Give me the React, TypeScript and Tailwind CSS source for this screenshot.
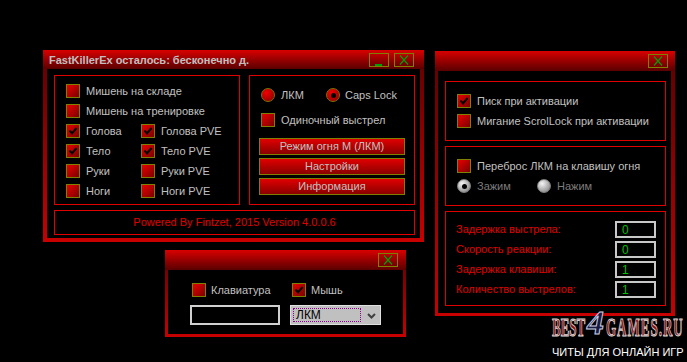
import React from "react";

function Check({ checked }: { checked?: boolean }) {
  return (
    <div className="relative w-[14px] h-[14px] shrink-0 border border-[#808000] bg-[linear-gradient(135deg,#e80000,#7a0000)]">
      {checked && (
        <svg className="absolute left-0 top-0" width="12" height="12" viewBox="0 0 12 12">
          <path d="M2.5 5.5 L5 8.5 L9.5 3" stroke="#000" strokeWidth="2" fill="none" />
        </svg>
      )}
    </div>
  );
}

function Radio({ checked, gray }: { checked?: boolean; gray?: boolean }) {
  return (
    <div
      className={
        "relative w-[14px] h-[14px] shrink-0 rounded-full border flex items-center justify-center " +
        (gray
          ? "border-[#808080] bg-[radial-gradient(circle_at_35%_30%,#f4f4f4,#9a9a9a_70%,#6a6a6a)]"
          : "border-[#807000] bg-[radial-gradient(circle_at_35%_30%,#f00000,#b00000_60%,#700000)]")
      }
    >
      {checked && <div className="w-[5px] h-[5px] rounded-full bg-black" />}
    </div>
  );
}

function CloseBtn() {
  return (
    <div className="relative w-[20px] h-[14px] border border-[#808000]">
      <svg className="absolute left-0 top-0" width="18" height="12" viewBox="0 0 18 12">
        <path d="M5 1.5 L13 10.5 M13 1.5 L5 10.5" stroke="#00a000" strokeWidth="1.2" fill="none" />
      </svg>
    </div>
  );
}

function MinBtn() {
  return (
    <div className="relative w-[20px] h-[14px] border border-[#808000] flex items-end justify-center">
      <div className="w-[7px] h-[2px] bg-[#00a000] ml-[-2px]" />
    </div>
  );
}

function Btn({ children }: { children: React.ReactNode }) {
  return (
    <div className="h-[17px] border border-[#808000] bg-[linear-gradient(to_bottom,#e00000,#8a0000)] flex items-center justify-center text-[11px] leading-none text-[#c0c0c0]">
      {children}
    </div>
  );
}

function Row({ children }: { children: React.ReactNode }) {
  return <div className="flex items-center gap-[6px] h-[14px]">{children}</div>;
}

const lbl = "text-[11px] leading-none text-[#c0c0c0] whitespace-nowrap";
const red = "text-[11px] leading-none text-[#e00000] whitespace-nowrap";

function NumBox({ v }: { v: string }) {
  return (
    <div className="w-[41px] h-[17px] border-2 border-[#c8c8c8] bg-black flex items-center pl-[5px] text-[12px] leading-none text-[#00c000]">
      {v}
    </div>
  );
}

export default function App() {
  return (
    <div className="relative w-[687px] h-[362px] bg-black overflow-hidden font-['Liberation_Sans',Arial,sans-serif]">
      {/* Main window */}
      <div className="absolute left-[43px] top-[50px] w-[381px] h-[192px] flex flex-col bg-[linear-gradient(to_bottom,#600000,#c80000)]">
        <div className="h-[19px] shrink-0 flex items-start bg-[linear-gradient(to_bottom,#d80000,#5a0000)] pl-[6px] pr-[10px]">
          <span className="mt-[5px] text-[11px] font-bold leading-none text-[#c0c0c0] whitespace-nowrap">
            FastKillerEx осталось: бесконечно д.
          </span>
          <div className="ml-auto mt-[3px] flex gap-[5px]">
            <MinBtn />
            <CloseBtn />
          </div>
        </div>
        <div className="flex-1 mx-[4px] mb-[4px] bg-black flex flex-col pt-[6px] pl-[7px] pr-[5px]">
          <div className="flex gap-[9px] h-[130px]">
            <div className="w-[186px] border border-[#e00000] pt-[8px] pl-[11px] flex flex-col gap-[6px]">
              <Row>
                <Check />
                <span className={lbl}>Мишень на складе</span>
              </Row>
              <Row>
                <Check />
                <span className={lbl}>Мишень на тренировке</span>
              </Row>
              {[
                ["Голова", true, "Голова PVE", true],
                ["Тело", true, "Тело PVE", true],
                ["Руки", false, "Руки PVE", false],
                ["Ноги", false, "Ноги PVE", false],
              ].map((r) => (
                <div key={r[0] as string} className="grid grid-cols-[75px_1fr]">
                  <Row>
                    <Check checked={r[1] as boolean} />
                    <span className={lbl}>{r[0] as string}</span>
                  </Row>
                  <Row>
                    <Check checked={r[3] as boolean} />
                    <span className={lbl}>{r[2] as string}</span>
                  </Row>
                </div>
              ))}
            </div>
            <div className="w-[166px] border border-[#e00000] pt-[12px] px-[9px] flex flex-col">
              <div className="flex pl-[2px]">
                <div className="w-[65px] flex items-center gap-[6px]">
                  <Radio />
                  <span className={lbl}>ЛКМ</span>
                </div>
                <div className="flex items-center gap-[5px]">
                  <Radio checked />
                  <span className={lbl}>Caps Lock</span>
                </div>
              </div>
              <div className="pl-[2px] mt-[11px]">
                <Row>
                  <Check />
                  <span className={lbl}>Одиночный выстрел</span>
                </Row>
              </div>
              <div className="mt-[11px] flex flex-col gap-[3px]">
                <Btn>Режим огня M (ЛКМ)</Btn>
                <Btn>Настройки</Btn>
                <Btn>Информация</Btn>
              </div>
            </div>
          </div>
          <div className="mt-[5px] h-[25px] border border-[#e00000] flex items-center justify-center">
            <span className={red}>Powered By Fintzet, 2015 Version 4.0.0.6</span>
          </div>
        </div>
      </div>

      {/* Small window */}
      <div className="absolute left-[165px] top-[250px] w-[241px] h-[87px] flex flex-col bg-[linear-gradient(to_bottom,#600000,#c80000)]">
        <div className="h-[20px] shrink-0 flex justify-end items-start pt-[3px] pr-[8px] bg-[linear-gradient(to_bottom,#d80000,#5a0000)]">
          <CloseBtn />
        </div>
        <div className="flex-1 mx-[3px] mb-[3px] bg-black pt-[13px] pl-[22px] flex flex-col">
          <div className="flex pl-[2px]">
            <div className="w-[100px] flex items-center gap-[5px]">
              <Check />
              <span className={lbl}>Клавиатура</span>
            </div>
            <div className="flex items-center gap-[5px]">
              <Check checked />
              <span className={lbl}>Мышь</span>
            </div>
          </div>
          <div className="mt-[8px] flex gap-[10px]">
            <div className="w-[90px] h-[20px] border-2 border-[#d0d0d0] bg-black" />
            <div className="relative w-[91px] h-[20px] border border-[#e0e0e0] bg-[#c0c0c0] flex items-center">
              <div className="ml-[2px] w-[68px] h-[14px] border border-dotted border-[#900090] flex items-center pl-[2px] text-[12px] leading-none text-black">
                ЛКМ
              </div>
              <svg className="absolute right-[4px] top-[7px]" width="9" height="6" viewBox="0 0 9 6">
                <path d="M1 1 L4.5 4.5 L8 1" stroke="#404040" strokeWidth="2" fill="none" />
              </svg>
            </div>
          </div>
        </div>
      </div>

      {/* Right window */}
      <div className="absolute left-[435px] top-[51px] w-[240px] h-[265px] flex flex-col bg-[linear-gradient(to_bottom,#600000,#c80000)]">
        <div className="h-[20px] shrink-0 flex justify-end items-start pt-[3px] pr-[7px] bg-[linear-gradient(to_bottom,#d80000,#5a0000)]">
          <CloseBtn />
        </div>
        <div className="flex-1 ml-[3px] mr-[4px] mb-[3px] bg-black pt-[10px] pl-[7px] pr-[5px] flex flex-col gap-[5px]">
          <div className="h-[60px] border border-[#e00000] pt-[12px] pl-[11px] flex flex-col gap-[6px]">
            <Row>
              <Check checked />
              <span className={lbl}>Писк при активации</span>
            </Row>
            <Row>
              <Check />
              <span className={lbl}>Мигание ScrolLock при активации</span>
            </Row>
          </div>
          <div className="h-[60px] border border-[#e00000] pt-[12px] pl-[11px] flex flex-col gap-[6px]">
            <Row>
              <Check />
              <span className={lbl}>Переброс ЛКМ на клавишу огня</span>
            </Row>
            <div className="flex">
              <div className="w-[80px] flex items-center gap-[6px]">
                <Radio gray checked />
                <span className="text-[11px] leading-none text-[#7c7c7c]">Зажим</span>
              </div>
              <div className="flex items-center gap-[6px]">
                <Radio gray />
                <span className="text-[11px] leading-none text-[#7c7c7c]">Нажим</span>
              </div>
            </div>
          </div>
          <div className="h-[95px] border border-[#e00000] pt-[9px] pl-[10px] pr-[9px] flex flex-col gap-[3px]">
            {[
              ["Задержка выстрела:", "0"],
              ["Скорость реакции:", "0"],
              ["Задержка клавиши:", "1"],
              ["Количество выстрелов:", "1"],
            ].map(([t, v]) => (
              <div key={t} className="flex items-center justify-between">
                <span className={red}>{t}</span>
                <NumBox v={v} />
              </div>
            ))}
          </div>
        </div>
      </div>

      {/* Watermark */}
      <div className="absolute left-[552px] top-[311px] flex items-end h-[29px] font-['Liberation_Serif',serif] font-bold">
        <span className="block w-[34px] h-[13px] leading-[13px] text-[13px] origin-bottom scale-y-[2] text-[#8a1010] [-webkit-text-stroke:0.5px_#d8d8d8] whitespace-nowrap">
          BEST
        </span>
        <span className="block w-[20px] h-[34px] leading-none text-[34px] italic pl-[1px] text-[#1a1a40] [-webkit-text-stroke:1px_#c8d0e8]">
          4
        </span>
        <span className="block w-[80px] h-[13px] leading-[13px] text-[13px] tracking-[1px] origin-bottom scale-y-[2] text-[#8a1010] [-webkit-text-stroke:0.5px_#d8d8d8] whitespace-nowrap">
          GAMES.RU
        </span>
      </div>
      <div className="absolute left-[552px] top-[347px] text-[11px] leading-none text-white whitespace-nowrap">
        ЧИТЫ ДЛЯ ОНЛАЙН ИГР
      </div>
    </div>
  );
}
